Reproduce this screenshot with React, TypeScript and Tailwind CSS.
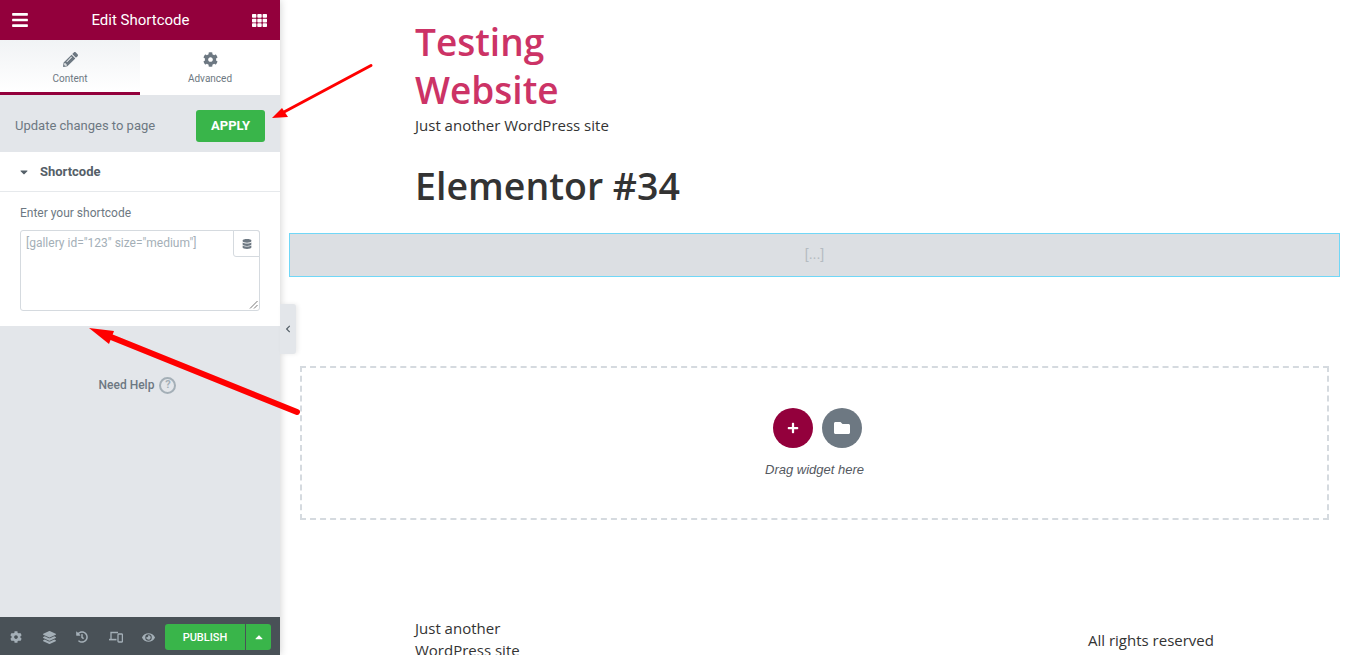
// App.tsx
import { FaBars, FaTh, FaPencilAlt, FaCog, FaCaretDown, FaCaretUp, FaDatabase, FaLayerGroup, FaHistory, FaEye, FaFolder, FaPlus, FaChevronLeft } from 'react-icons/fa'

const ResponsiveIcon = () => (
    <svg width="14" height="12" viewBox="0 0 14 12" fill="none" stroke="currentColor" strokeWidth="1.3">
        <path d="M2 8V1.5h7" />
        <path d="M0 8.6h7.5" strokeWidth="1.6" />
        <rect x="9" y="3" width="4.4" height="8" rx="0.8" />
    </svg>
)

const Sidebar = () => (
    <aside className="relative z-10 flex h-[655px] w-[280px] shrink-0 flex-col bg-[#e3e6ea] font-['Roboto',sans-serif] shadow-[0_0_8px_rgba(0,0,0,0.2)]">
        <header className="flex h-10 items-center justify-between bg-[#93003c] pl-[11px] pr-[13px] text-white">
            <FaBars className="h-[18px] w-[18px]" />
            <h1 className="text-[15px] font-normal">Edit Shortcode</h1>
            <FaTh className="h-[15px] w-[15px]" />
        </header>

        <div className="flex h-[55px]">
            <div className="flex w-[140px] flex-col items-center border-b-[3px] border-[#93003c] bg-gradient-to-b from-[#f1f3f5] to-white pt-[12px] text-[#6d7882]">
                <FaPencilAlt className="h-[15px] w-[15px]" />
                <span className="mt-[6px] text-[10px] leading-[12px]">Content</span>
            </div>
            <div className="flex w-[140px] flex-col items-center bg-white pt-[12px] text-[#6d7882]">
                <FaCog className="h-[15px] w-[15px]" />
                <span className="mt-[6px] text-[10px] leading-[12px]">Advanced</span>
            </div>
        </div>

        <div className="flex h-[57px] items-center justify-between px-[15px] pt-[4px]">
            <span className="text-[13px] text-[#6d7882]">Update changes to page</span>
            <button className="h-8 w-[69px] rounded-[3px] bg-[#39b54a] text-[13px] font-bold text-white">APPLY</button>
        </div>

        <div className="bg-white pb-[15px]">
            <div className="flex h-10 items-center border-b border-[#e6e9ec] pl-[19px] text-[#556068]">
                <FaCaretDown className="h-[12px] w-[10px]" />
                <span className="ml-[11px] text-[13px] font-bold">Shortcode</span>
            </div>
            <div className="px-5 pt-[14px]">
                <label className="block text-[12px] leading-[14px] text-[#6d7882]">Enter your shortcode</label>
                <div className="relative mt-[10px] h-[81px] w-[240px] rounded-[3px] border border-[#d5dadf] bg-white">
                    <span className="absolute left-[5px] top-[3px] text-[12px] text-[#a4afb7]">[gallery id="123" size="medium"]</span>
                    <div className="absolute -right-px -top-px flex h-[27px] w-[27px] items-center justify-center rounded-bl-[3px] rounded-tr-[3px] border border-[#d5dadf] bg-white text-[#6d7882]">
                        <FaDatabase className="h-[10px] w-[10px]" />
                    </div>
                    <svg className="absolute bottom-[1px] right-[1px]" width="9" height="9" viewBox="0 0 9 9" stroke="#555" strokeWidth="0.8">
                        <path d="M1 8.5 8.5 1M5 8.5 8.5 5" />
                    </svg>
                </div>
            </div>
        </div>

        <div className="flex h-[118px] items-center justify-center gap-[5px] pr-[5px] text-[#6d7882]">
            <span className="text-[12px] font-medium">Need Help</span>
            <span className="flex h-[17px] w-[17px] items-center justify-center rounded-full border-2 border-[#a4afb7] text-[11px] font-bold text-[#a4afb7]">?</span>
        </div>

        <div className="flex-1" />

        <footer className="flex h-[38px] items-center bg-[#495157] pl-[10px] pr-[9px] pt-[2px] text-[#a4afb7]">
            <div className="flex w-[155px] items-center">
                <FaCog className="h-3 w-3" />
                <FaLayerGroup className="ml-[21px] h-[13px] w-[13px]" />
                <FaHistory className="ml-[20px] h-3 w-3" />
                <span className="ml-[21px]"><ResponsiveIcon /></span>
                <FaEye className="ml-[19px] h-[13px] w-[13px]" />
            </div>
            <div className="flex h-[26px] text-white">
                <button className="w-[80px] rounded-l-[3px] bg-[#39b54a] pt-[2px] text-[11px] font-medium">PUBLISH</button>
                <button className="ml-px flex w-[25px] items-center justify-center rounded-r-[3px] bg-[#39b54a]"><FaCaretUp className="h-3 w-[10px]" /></button>
            </div>
        </footer>

        <div className="absolute left-[280px] top-[304px] flex h-[50px] w-[16px] items-center justify-center rounded-r-[3px] bg-[#e3e6ea] text-[#556068] shadow-[2px_0_4px_rgba(0,0,0,0.08)]">
            <FaChevronLeft className="h-2 w-2" />
        </div>
    </aside>
)

const Preview = () => (
    <main className="min-w-0 flex-1 bg-white font-['Open_Sans',sans-serif]">
        <div className="pl-[135px] pt-[18px]">
            <div className="w-[200px] text-[37px] font-semibold leading-[48px] text-[#cc3366]">Testing Website</div>
            <p className="mt-[1px] text-[15px] leading-[20px] text-[#333]">Just another WordPress site</p>
            <h2 className="mt-[26px] text-[37.5px] font-semibold leading-[50px] text-[#333]">Elementor #34</h2>
        </div>

        <div className="ml-[9px] mr-[7px] mt-[22px] flex h-[44px] items-center justify-center border border-[#71d7f7] bg-[#dcdfe3] pb-[1px] font-['Liberation_Sans',sans-serif] text-[14px] text-[#b5bbc1]">
            [...]
        </div>

        <div className="ml-[20px] mr-[18px] mt-[89px] flex h-[154px] flex-col items-center border-2 border-dashed border-[#d5dadf] pt-[40px]">
            <div className="ml-[6px] flex gap-[9px]">
                <div className="flex h-10 w-10 items-center justify-center rounded-full bg-[#93003c] text-white"><FaPlus className="h-3 w-3" /></div>
                <div className="flex h-10 w-10 items-center justify-center rounded-full bg-[#6d7882] text-white"><FaFolder className="h-4 w-4" /></div>
            </div>
            <p className="mt-[12px] font-['Liberation_Sans',sans-serif] text-[13px] italic text-[#54595f]">Drag widget here</p>
        </div>

        <div className="mt-[97px] flex pl-[135px] text-[15px] leading-[22px] text-[#333]">
            <p className="w-[120px]">Just another WordPress site</p>
            <p className="ml-[553px] mt-[12px] whitespace-nowrap">All rights reserved</p>
        </div>
    </main>
)

export default function App() {
    return (
        <div className="relative flex h-[655px] w-[1347px] overflow-hidden bg-white">
            <Sidebar />
            <Preview />
            {/* annotation arrows */}
            <svg className="pointer-events-none absolute left-0 top-0 z-20" width="1347" height="655">
                <path d="M371 65.500 284 112" stroke="#ff0000" strokeWidth="3" strokeLinecap="round" />
                <path d="M272 118 282 108 288 117Z" fill="#ff0000" />
                <path d="M297 412 111 337" stroke="#ff0000" strokeWidth="6" strokeLinecap="round" />
                <path d="M89 328 114 331 109 344Z" fill="#ff0000" />
            </svg>
        </div>
    )
}
